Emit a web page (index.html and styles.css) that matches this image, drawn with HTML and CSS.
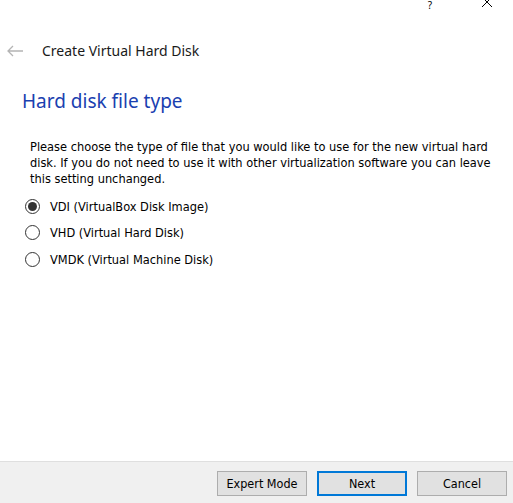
FILE: index.html
```html
<!DOCTYPE html>
<html>
<head>
<meta charset="utf-8">
<link rel="stylesheet" href="styles.css">
</head>
<body>
<div class="window">
  <div class="titlebar">
    <span class="tb-help">?</span>
    <span class="tb-close">
      <svg width="12" height="12" viewBox="0 0 12 12"><path d="M1 1 L11 11 M11 1 L1 11" stroke="#000" stroke-width="1" fill="none"/></svg>
    </span>
  </div>
  <div class="header">
    <svg class="back" width="16" height="12" viewBox="0 0 16 12"><path d="M1 6 H16 M6 1 L1 6 L6 11" stroke="#b4b4b4" stroke-width="1.3" fill="none"/></svg>
    <span class="header-title">Create Virtual Hard Disk</span>
  </div>
  <div class="content">
    <h1 class="page-title">Hard disk file type</h1>
    <p class="desc">Please choose the type of file that you would like to use for the new virtual hard disk. If you do not need to use it with other virtualization software you can leave this setting unchanged.</p>
    <div class="options">
      <div class="option"><span class="radio checked"><span class="dot"></span></span><span class="label">VDI (VirtualBox Disk Image)</span></div>
      <div class="option"><span class="radio"></span><span class="label">VHD (Virtual Hard Disk)</span></div>
      <div class="option"><span class="radio"></span><span class="label">VMDK (Virtual Machine Disk)</span></div>
    </div>
  </div>
  <div class="footer">
    <button class="btn">Expert Mode</button>
    <button class="btn default">Next</button>
    <button class="btn">Cancel</button>
  </div>
</div>
</body>
</html>
```
FILE: styles.css
```css
html, body {
  margin: 0;
  padding: 0;
  background: #ffffff;
}
.window {
  width: 513px;
  height: 503px;
  display: flex;
  flex-direction: column;
  background: #ffffff;
  overflow: hidden;
}
.titlebar {
  height: 12px;
  display: flex;
  justify-content: flex-end;
  align-items: flex-start;
}
.tb-help {
  font-family: "Noto Sans", sans-serif;
  font-size: 10px;
  line-height: 10px;
  color: #000;
  margin-top: 0;
  margin-right: 49px;
}
.tb-close {
  margin-right: 20px;
}
.tb-close svg { display: block; margin-top: -4px; }
.header {
  display: flex;
  align-items: center;
  height: 30px;
  margin-top: 28px;
  padding-left: 7px;
}
.back { display: block; margin-top: -8px; }
.header-title {
  margin-left: 19px;
  font-family: "Noto Sans", "Open Sans", sans-serif;
  font-size: 14px;
  color: #1a1a1a;
  margin-top: -10px;
}
.content {
  flex: 1;
  padding-left: 22px;
  padding-right: 16px;
}
.page-title {
  margin: 18px 0 0 0;
  font-family: "Noto Sans", "Open Sans", sans-serif;
  font-weight: normal;
  font-size: 19px;
  line-height: 26px;
  color: #1a40b0;
}
.desc {
  margin: 25px 0 0 8px;
  font-family: "DejaVu Sans Condensed", "DejaVu Sans", sans-serif;
  font-size: 12.7px;
  line-height: 16px;
  color: #000;
}
.options {
  margin-top: 11px;
  margin-left: 3px;
  display: flex;
  flex-direction: column;
  gap: 10.5px;
}
.option {
  display: flex;
  align-items: center;
  height: 16px;
}
.radio {
  width: 15px;
  height: 15px;
  border: 1px solid #333;
  border-radius: 50%;
  box-sizing: border-box;
  display: flex;
  align-items: center;
  justify-content: center;
  background: #fff;
}
.radio .dot {
  width: 9px;
  height: 9px;
  border-radius: 50%;
  background: #333;
}
.label {
  margin-left: 10px;
  font-family: "DejaVu Sans Condensed", "DejaVu Sans", sans-serif;
  font-size: 12.7px;
  color: #000;
}
.footer {
  height: 42px;
  border-top: 1px solid #dfdfdf;
  background: #f0f0f0;
  display: flex;
  justify-content: flex-end;
  align-items: flex-start;
  padding-top: 9px;
  padding-right: 6px;
  gap: 10px;
  box-sizing: border-box;
}
.btn {
  width: 90px;
  height: 25px;
  border: 1px solid #adadad;
  background: #e1e1e1;
  font-family: "DejaVu Sans Condensed", "DejaVu Sans", sans-serif;
  font-size: 12.5px;
  color: #000;
  padding: 0;
  margin: 0;
}
.btn.default {
  border: 2px solid #0078d7;
}
```
